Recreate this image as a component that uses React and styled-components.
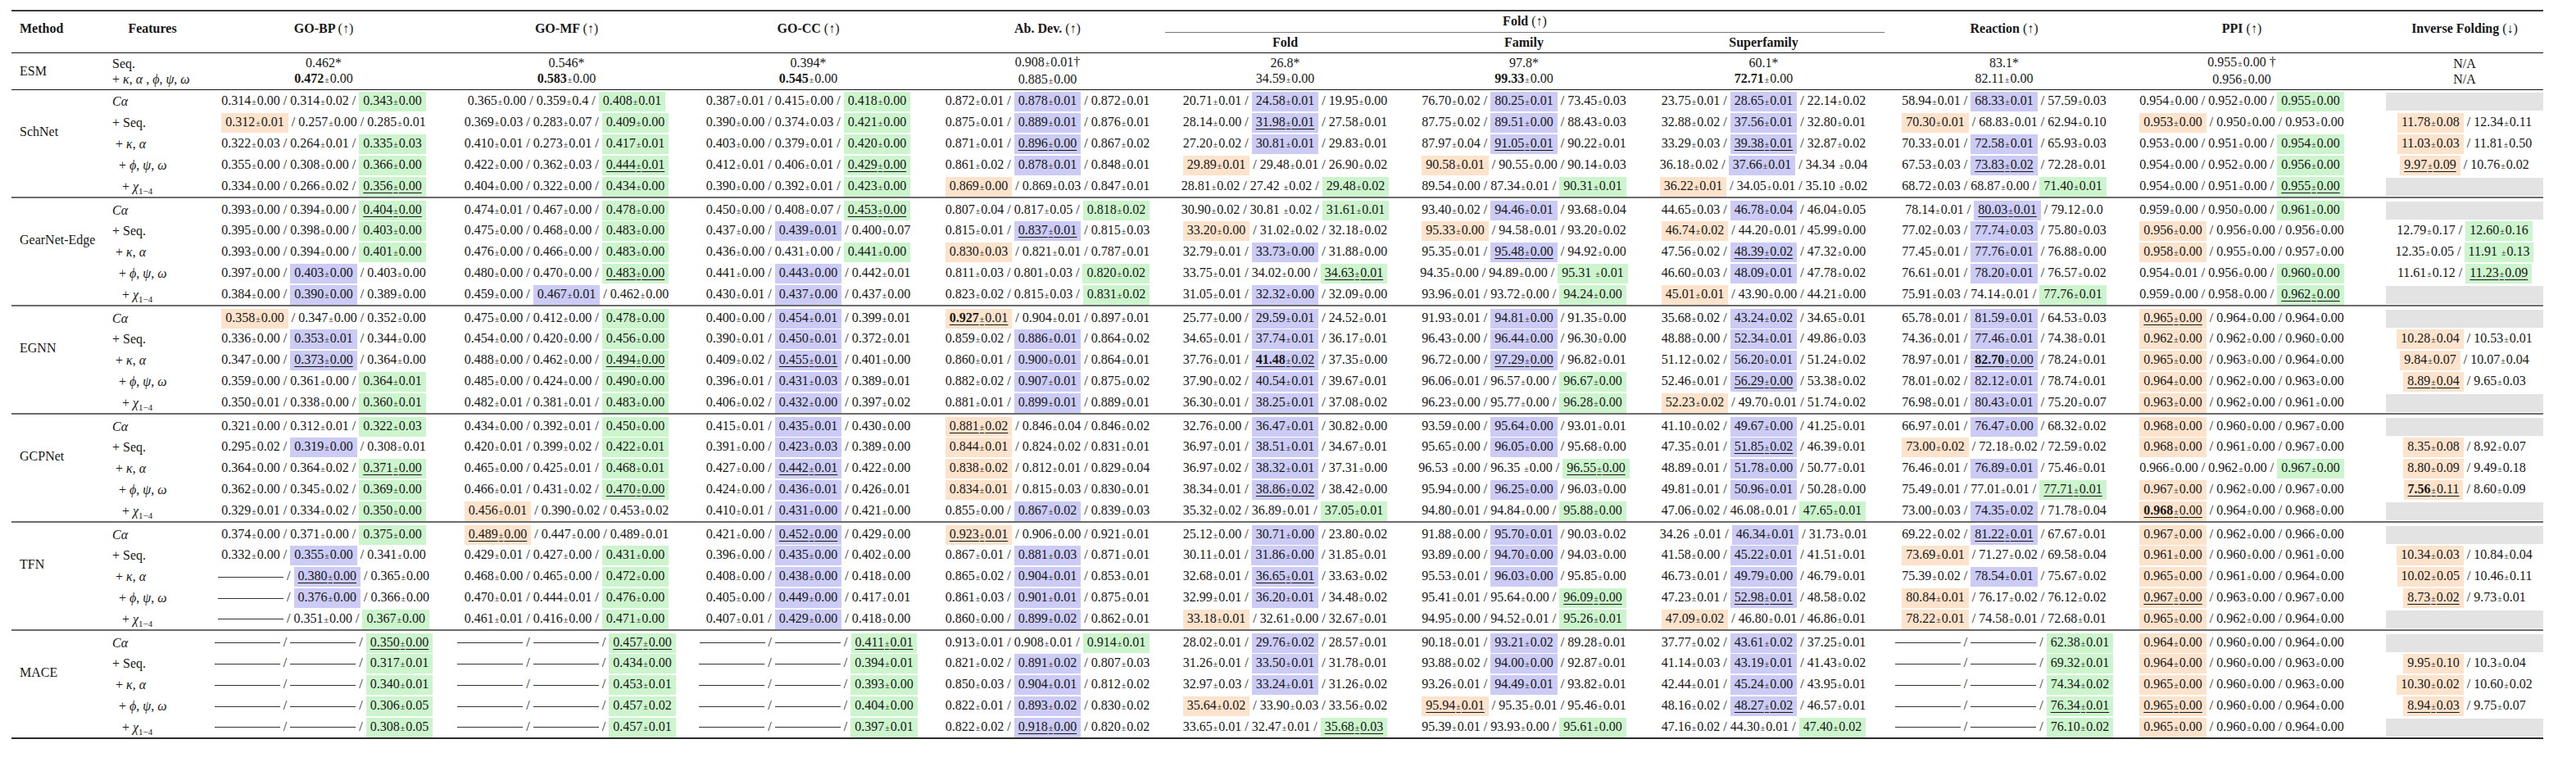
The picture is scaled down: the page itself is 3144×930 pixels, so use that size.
import React from 'react';
import styled, { createGlobalStyle } from 'styled-components';

const GlobalStyle = createGlobalStyle`
  body {
    margin: 0;
    background: #fff;
    color: #161616;
    font-family: "Liberation Serif", "DejaVu Serif", serif;
  }
`;

const TONES = { g: '#cdf5cd', b: '#cbcbf5', o: '#fde2cc' };

const Page = styled.div`
  padding: 12px 0 16px 14px;
`;

const Table = styled.table`
  width: 3090px;
  table-layout: fixed;
  border-collapse: collapse;
  font-size: 16px;
`;

const Head = styled.thead`
  border-top: 2px solid #3a3a3a;
  border-bottom: 1px solid #111;
`;

const HeadRow = styled.tr`
  height: ${p => p.$h}px;
`;

const HeadCell = styled.th`
  font-weight: bold;
  text-align: ${p => p.$align || 'center'};
  vertical-align: ${p => (p.$top ? 'top' : 'middle')};
  padding: ${p => (p.$top ? 11 : 0)}px ${p => p.$right || 0}px 0 ${p => p.$left || 0}px;
  line-height: 20px;
  white-space: nowrap;
  border-bottom: ${p => (p.$rule ? '1px solid #777' : 'none')};
`;

const Arrow = styled.span`
  font-weight: normal;
`;

const EsmBody = styled.tbody``;

const EsmRow = styled.tr`
  height: 45px;
`;

const Group = styled.tbody`
  border-top: ${p => (p.$first ? '1px solid #111' : '2px solid #6b6b6b')};
  border-bottom: ${p => (p.$last ? '2px solid #2a2a2a' : 'none')};
`;

const Row = styled.tr`
  height: ${p => (p.$first ? 28 : 26)}px;
`;

const MethodCell = styled.td`
  padding: 0 0 ${p => p.$lift || 0}px 10px;
  vertical-align: middle;
  text-align: left;
  white-space: nowrap;
`;

const FeatureCell = styled.td`
  padding: ${p => (p.$first ? 2 : 0)}px 0 0 ${p => 10 + (p.$indent || 0)}px;
  vertical-align: middle;
  text-align: left;
  white-space: nowrap;
  line-height: ${p => p.$lh || 22}px;
`;

const Cell = styled.td`
  padding: ${p => (p.$first ? 2 : 0)}px ${p => p.$right || 0}px 0 0;
  text-align: center;
  vertical-align: middle;
  white-space: nowrap;
  line-height: ${p => p.$lh || 22}px;
`;

const Shade = styled.div`
  height: 22px;
  background: #e3e3e3;
`;

const Num = styled.span`
  display: inline-block;
  padding: ${p => (p.$tone ? '0 5px' : '0')};
  background: ${p => TONES[p.$tone] || 'transparent'};
  text-decoration: ${p => (p.$under ? 'underline' : 'none')};
  text-underline-offset: 3px;
  text-decoration-thickness: 1px;
`;

const Main = styled.span`
  font-weight: ${p => (p.$bold ? 'bold' : 'normal')};
`;

const Pm = styled.span`
  font-size: 10px;
  margin: 0 1px;
`;

const Dash = styled.span`
  display: inline-block;
  width: 80px;
  border-top: 1px solid #333;
  vertical-align: middle;
`;

const M = styled.i`
  font-style: italic;
`;

const Sub = styled.sub`
  font-size: 11px;
  vertical-align: -4px;
  line-height: 0;
`;

const parseValue = raw => {
  let s = raw.trim();
  let tone = null;
  const m = s.match(/^([gbo]):/);
  if (m) {
    tone = m[1];
    s = s.slice(2);
  }
  let under = false;
  let bold = false;
  if (s.startsWith('_')) {
    under = true;
    s = s.slice(1);
  }
  if (s.startsWith('!')) {
    bold = true;
    s = s.slice(1);
  }
  const [main, rest] = s.split('±');
  return { tone, under, bold, main, rest };
};

const Value = ({ raw }) => {
  if (raw.trim() === '-') return <Dash />;
  const v = parseValue(raw);
  return (
    <Num $tone={v.tone} $under={v.under}>
      <Main $bold={v.bold}>{v.main}</Main>
      {v.rest !== undefined && (
        <>
          <Pm>±</Pm>
          {v.rest}
        </>
      )}
    </Num>
  );
};

const Values = ({ text }) => {
  const parts = text.split(' / ');
  return parts.map((p, i) => (
    <React.Fragment key={i}>
      {i > 0 && ' / '}
      <Value raw={p} />
    </React.Fragment>
  ));
};

const COLS = [113, 118, 300, 293, 297, 287, 293, 290, 295, 292, 320, 192];
const PPI_COL = 8;

const ESM = [
  ['0.462*', '!0.472±0.00'],
  ['0.546*', '!0.583±0.00'],
  ['0.394*', '!0.545±0.00'],
  ['0.908±0.01†', '0.885±0.00'],
  ['26.8*', '34.59±0.00'],
  ['97.8*', '!99.33±0.00'],
  ['60.1*', '!72.71±0.00'],
  ['83.1*', '82.11±0.00'],
  ['0.955±0.00 †', '0.956±0.00'],
  ['N/A', 'N/A'],
];

const FEATURES = [
  { indent: 0, node: <><M>C</M><M>α</M></> },
  { indent: 0, node: <>+ Seq.</> },
  { indent: 4, node: <>+ <M>κ</M>, <M>α</M></> },
  { indent: 8, node: <>+ <M>ϕ</M>, <M>ψ</M>, <M>ω</M></> },
  { indent: 12, node: <>+ <M>χ</M><Sub>1−4</Sub></> },
];

const GROUPS = [
  {
    name: 'SchNet',
    rows: [
      ['0.314±0.00 / 0.314±0.02 / g:0.343±0.00', '0.365±0.00 / 0.359±0.4 / g:0.408±0.01', '0.387±0.01 / 0.415±0.00 / g:0.418±0.00', '0.872±0.01 / b:0.878±0.01 / 0.872±0.01', '20.71±0.01 / b:24.58±0.01 / 19.95±0.00', '76.70±0.02 / b:80.25±0.01 / 73.45±0.03', '23.75±0.01 / b:28.65±0.01 / 22.14±0.02', '58.94±0.01 / b:68.33±0.01 / 57.59±0.03', '0.954±0.00 / 0.952±0.00 / g:0.955±0.00', 'gray'],
      ['o:0.312±0.01 / 0.257±0.00 / 0.285±0.01', '0.369±0.03 / 0.283±0.07 / g:0.409±0.00', '0.390±0.00 / 0.374±0.03 / g:0.421±0.00', '0.875±0.01 / b:0.889±0.01 / 0.876±0.01', '28.14±0.00 / b:_31.98±0.01 / 27.58±0.01', '87.75±0.02 / b:89.51±0.00 / 88.43±0.03', '32.88±0.02 / b:37.56±0.01 / 32.80±0.01', 'o:70.30±0.01 / 68.83±0.01 / 62.94±0.10', 'o:0.953±0.00 / 0.950±0.00 / 0.953±0.00', 'o:11.78±0.08 / 12.34±0.11'],
      ['0.322±0.03 / 0.264±0.01 / g:0.335±0.03', '0.410±0.01 / 0.273±0.01 / g:0.417±0.01', '0.403±0.00 / 0.379±0.01 / g:0.420±0.00', '0.871±0.01 / b:_0.896±0.00 / 0.867±0.02', '27.20±0.02 / b:30.81±0.01 / 29.83±0.01', '87.97±0.04 / b:_91.05±0.01 / 90.22±0.01', '33.29±0.03 / b:_39.38±0.01 / 32.87±0.02', '70.33±0.01 / b:72.58±0.01 / 65.93±0.03', '0.953±0.00 / 0.951±0.00 / g:0.954±0.00', 'o:11.03±0.03 / 11.81±0.50'],
      ['0.355±0.00 / 0.308±0.00 / g:0.366±0.00', '0.422±0.00 / 0.362±0.03 / g:_0.444±0.01', '0.412±0.01 / 0.406±0.01 / g:_0.429±0.00', '0.861±0.02 / b:0.878±0.01 / 0.848±0.01', 'o:29.89±0.01 / 29.48±0.01 / 26.90±0.02', 'o:90.58±0.01 / 90.55±0.00 / 90.14±0.03', '36.18±0.02 / b:37.66±0.01 / 34.34 ±0.04', '67.53±0.03 / b:_73.83±0.02 / 72.28±0.01', '0.954±0.00 / 0.952±0.00 / g:0.956±0.00', 'o:_9.97±0.09 / 10.76±0.02'],
      ['0.334±0.00 / 0.266±0.02 / g:_0.356±0.00', '0.404±0.00 / 0.322±0.00 / g:0.434±0.00', '0.390±0.00 / 0.392±0.01 / g:0.423±0.00', 'o:0.869±0.00 / 0.869±0.03 / 0.847±0.01', '28.81±0.02 / 27.42 ±0.02 / g:29.48±0.02', '89.54±0.00 / 87.34±0.01 / g:90.31±0.01', 'o:36.22±0.01 / 34.05±0.01 / 35.10 ±0.02', '68.72±0.03 / 68.87±0.00 / g:71.40±0.01', '0.954±0.00 / 0.951±0.00 / g:_0.955±0.00', 'gray'],
    ],
  },
  {
    name: 'GearNet-Edge',
    rows: [
      ['0.393±0.00 / 0.394±0.00 / g:_0.404±0.00', '0.474±0.01 / 0.467±0.00 / g:0.478±0.00', '0.450±0.00 / 0.408±0.07 / g:_0.453±0.00', '0.807±0.04 / 0.817±0.05 / g:0.818±0.02', '30.90±0.02 / 30.81 ±0.02 / g:31.61±0.01', '93.40±0.02 / b:94.46±0.01 / 93.68±0.04', '44.65±0.03 / b:46.78±0.04 / 46.04±0.05', '78.14±0.01 / b:_80.03±0.01 / 79.12±0.0', '0.959±0.00 / 0.950±0.00 / g:0.961±0.00', 'gray'],
      ['0.395±0.00 / 0.398±0.00 / g:0.403±0.00', '0.475±0.00 / 0.468±0.00 / g:0.483±0.00', '0.437±0.00 / b:0.439±0.01 / 0.400±0.07', '0.815±0.01 / b:_0.837±0.01 / 0.815±0.03', 'o:33.20±0.00 / 31.02±0.02 / 32.18±0.02', 'o:95.33±0.00 / 94.58±0.01 / 93.20±0.02', 'o:46.74±0.02 / 44.20±0.01 / 45.99±0.00', '77.02±0.03 / b:77.74±0.03 / 75.80±0.03', 'o:0.956±0.00 / 0.956±0.00 / 0.956±0.00', '12.79±0.17 / g:12.60±0.16'],
      ['0.393±0.00 / 0.394±0.00 / g:0.401±0.00', '0.476±0.00 / 0.466±0.00 / g:0.483±0.00', '0.436±0.00 / 0.431±0.00 / g:0.441±0.00', 'o:0.830±0.03 / 0.821±0.01 / 0.787±0.01', '32.79±0.01 / b:33.73±0.00 / 31.88±0.00', '95.35±0.01 / b:_95.48±0.00 / 94.92±0.00', '47.56±0.02 / b:_48.39±0.02 / 47.32±0.00', '77.45±0.01 / b:77.76±0.01 / 76.88±0.00', 'o:0.958±0.00 / 0.955±0.00 / 0.957±0.00', '12.35±0.05 / g:11.91 ±0.13'],
      ['0.397±0.00 / b:0.403±0.00 / 0.403±0.00', '0.480±0.00 / 0.470±0.00 / g:_0.483±0.00', '0.441±0.00 / b:0.443±0.00 / 0.442±0.01', '0.811±0.03 / 0.801±0.03 / g:0.820±0.02', '33.75±0.01 / 34.02±0.00 / g:_34.63±0.01', '94.35±0.00 / 94.89±0.00 / g:95.31 ±0.01', '46.60±0.03 / b:48.09±0.01 / 47.78±0.02', '76.61±0.01 / b:78.20±0.01 / 76.57±0.02', '0.954±0.01 / 0.956±0.00 / g:0.960±0.00', '11.61±0.12 / g:_11.23±0.09'],
      ['0.384±0.00 / b:0.390±0.00 / 0.389±0.00', '0.459±0.00 / b:0.467±0.01 / 0.462±0.00', '0.430±0.01 / b:0.437±0.00 / 0.437±0.00', '0.823±0.02 / 0.815±0.03 / g:0.831±0.02', '31.05±0.01 / b:32.32±0.00 / 32.09±0.00', '93.96±0.01 / 93.72±0.00 / g:94.24±0.00', 'o:45.01±0.01 / 43.90±0.00 / 44.21±0.00', '75.91±0.03 / 74.14±0.01 / g:77.76±0.01', '0.959±0.00 / 0.958±0.00 / g:_0.962±0.00', 'gray'],
    ],
  },
  {
    name: 'EGNN',
    rows: [
      ['o:0.358±0.00 / 0.347±0.00 / 0.352±0.00', '0.475±0.00 / 0.412±0.00 / g:0.478±0.00', '0.400±0.00 / b:0.454±0.01 / 0.399±0.01', 'o:_!0.927±0.01 / 0.904±0.01 / 0.897±0.01', '25.77±0.00 / b:29.59±0.01 / 24.52±0.01', '91.93±0.01 / b:94.81±0.00 / 91.35±0.00', '35.68±0.02 / b:43.24±0.02 / 34.65±0.01', '65.78±0.01 / b:81.59±0.01 / 64.53±0.03', 'o:_0.965±0.00 / 0.964±0.00 / 0.964±0.00', 'gray'],
      ['0.336±0.00 / b:0.353±0.01 / 0.344±0.00', '0.454±0.00 / 0.420±0.00 / g:0.456±0.00', '0.390±0.01 / b:0.450±0.01 / 0.372±0.01', '0.859±0.02 / b:0.886±0.01 / 0.864±0.02', '34.65±0.01 / b:37.74±0.01 / 36.17±0.01', '96.43±0.00 / b:96.44±0.00 / 96.30±0.00', '48.88±0.00 / b:52.34±0.01 / 49.86±0.03', '74.36±0.01 / b:77.46±0.01 / 74.38±0.01', 'o:0.962±0.00 / 0.962±0.00 / 0.960±0.00', 'o:10.28±0.04 / 10.53±0.01'],
      ['0.347±0.00 / b:_0.373±0.00 / 0.364±0.00', '0.488±0.00 / 0.462±0.00 / g:_0.494±0.00', '0.409±0.02 / b:_0.455±0.01 / 0.401±0.00', '0.860±0.01 / b:0.900±0.01 / 0.864±0.01', '37.76±0.01 / b:_!41.48±0.02 / 37.35±0.00', '96.72±0.00 / b:_97.29±0.00 / 96.82±0.01', '51.12±0.02 / b:56.20±0.01 / 51.24±0.02', '78.97±0.01 / b:_!82.70±0.00 / 78.24±0.01', 'o:0.965±0.00 / 0.963±0.00 / 0.964±0.00', 'o:9.84±0.07 / 10.07±0.04'],
      ['0.359±0.00 / 0.361±0.00 / g:0.364±0.01', '0.485±0.00 / 0.424±0.00 / g:0.490±0.00', '0.396±0.01 / b:0.431±0.03 / 0.389±0.01', '0.882±0.02 / b:0.907±0.01 / 0.875±0.02', '37.90±0.02 / b:40.54±0.01 / 39.67±0.01', '96.06±0.01 / 96.57±0.00 / g:96.67±0.00', '52.46±0.01 / b:_56.29±0.00 / 53.38±0.02', '78.01±0.02 / b:82.12±0.01 / 78.74±0.01', 'o:0.964±0.00 / 0.962±0.00 / 0.963±0.00', 'o:_8.89±0.04 / 9.65±0.03'],
      ['0.350±0.01 / 0.338±0.00 / g:0.360±0.01', '0.482±0.01 / 0.381±0.01 / g:0.483±0.00', '0.406±0.02 / b:0.432±0.00 / 0.397±0.02', '0.881±0.01 / b:0.899±0.01 / 0.889±0.01', '36.30±0.01 / b:38.25±0.01 / 37.08±0.02', '96.23±0.00 / 95.77±0.00 / g:96.28±0.00', 'o:52.23±0.02 / 49.70±0.01 / 51.74±0.02', '76.98±0.01 / b:80.43±0.01 / 75.20±0.07', 'o:0.963±0.00 / 0.962±0.00 / 0.961±0.00', 'gray'],
    ],
  },
  {
    name: 'GCPNet',
    rows: [
      ['0.321±0.00 / 0.312±0.01 / g:0.322±0.03', '0.434±0.00 / 0.392±0.01 / g:0.450±0.00', '0.415±0.01 / b:0.435±0.01 / 0.430±0.00', 'o:_0.881±0.02 / 0.846±0.04 / 0.846±0.02', '32.76±0.00 / b:36.47±0.01 / 30.82±0.00', '93.59±0.00 / b:95.64±0.00 / 93.01±0.01', '41.10±0.02 / b:49.67±0.00 / 41.25±0.01', '66.97±0.01 / b:76.47±0.00 / 68.32±0.02', 'o:0.968±0.00 / 0.960±0.00 / 0.967±0.00', 'gray'],
      ['0.295±0.02 / b:0.319±0.00 / 0.308±0.01', '0.420±0.01 / 0.399±0.02 / g:0.422±0.01', '0.391±0.00 / b:0.423±0.03 / 0.389±0.00', 'o:0.844±0.01 / 0.824±0.02 / 0.831±0.01', '36.97±0.01 / b:38.51±0.01 / 34.67±0.01', '95.65±0.00 / b:96.05±0.00 / 95.68±0.00', '47.35±0.01 / b:_51.85±0.02 / 46.39±0.01', 'o:73.00±0.02 / 72.18±0.02 / 72.59±0.02', 'o:0.968±0.00 / 0.961±0.00 / 0.967±0.00', 'o:8.35±0.08 / 8.92±0.07'],
      ['0.364±0.00 / 0.364±0.02 / g:_0.371±0.00', '0.465±0.00 / 0.425±0.01 / g:0.468±0.01', '0.427±0.00 / b:_0.442±0.01 / 0.422±0.00', 'o:0.838±0.02 / 0.812±0.01 / 0.829±0.04', '36.97±0.02 / b:38.32±0.01 / 37.31±0.00', '96.53 ±0.00 / 96.35 ±0.00 / g:_96.55±0.00', '48.89±0.01 / b:51.78±0.00 / 50.77±0.01', '76.46±0.01 / b:76.89±0.01 / 75.46±0.01', '0.966±0.00 / 0.962±0.00 / g:0.967±0.00', 'o:8.80±0.09 / 9.49±0.18'],
      ['0.362±0.00 / 0.345±0.02 / g:0.369±0.00', '0.466±0.01 / 0.431±0.02 / g:_0.470±0.00', '0.424±0.00 / b:0.436±0.01 / 0.426±0.01', 'o:0.834±0.01 / 0.815±0.03 / 0.830±0.01', '38.34±0.01 / b:_38.86±0.02 / 38.42±0.00', '95.94±0.00 / b:96.25±0.00 / 96.03±0.00', '49.81±0.01 / b:50.96±0.01 / 50.28±0.00', '75.49±0.01 / 77.01±0.01 / g:_77.71±0.01', 'o:0.967±0.00 / 0.962±0.00 / 0.967±0.00', 'o:_!7.56±0.11 / 8.60±0.09'],
      ['0.329±0.01 / 0.334±0.02 / g:0.350±0.00', 'o:0.456±0.01 / 0.390±0.02 / 0.453±0.02', '0.410±0.01 / b:0.431±0.00 / 0.421±0.00', '0.855±0.00 / b:0.867±0.02 / 0.839±0.03', '35.32±0.02 / 36.89±0.01 / g:37.05±0.01', '94.80±0.01 / 94.84±0.00 / g:95.88±0.00', '47.06±0.02 / 46.08±0.01 / g:47.65±0.01', '73.00±0.03 / b:74.35±0.02 / 71.78±0.04', 'o:_!0.968±0.00 / 0.964±0.00 / 0.968±0.00', 'gray'],
    ],
  },
  {
    name: 'TFN',
    rows: [
      ['0.374±0.00 / 0.371±0.00 / g:0.375±0.00', 'o:_0.489±0.00 / 0.447±0.00 / 0.489±0.01', '0.421±0.00 / b:_0.452±0.00 / 0.429±0.00', 'o:_0.923±0.01 / 0.906±0.00 / 0.921±0.01', '25.12±0.00 / b:30.71±0.00 / 23.80±0.02', '91.88±0.00 / b:95.70±0.01 / 90.03±0.02', '34.26 ±0.01 / b:46.34±0.01 / 31.73±0.01', '69.22±0.02 / b:_81.22±0.01 / 67.67±0.01', 'o:0.967±0.00 / 0.962±0.00 / 0.966±0.00', 'gray'],
      ['0.332±0.00 / b:0.355±0.00 / 0.341±0.00', '0.429±0.01 / 0.427±0.00 / g:0.431±0.00', '0.396±0.00 / b:0.435±0.00 / 0.402±0.00', '0.867±0.01 / b:0.881±0.03 / 0.871±0.01', '30.11±0.01 / b:31.86±0.00 / 31.85±0.01', '93.89±0.00 / b:94.70±0.00 / 94.03±0.00', '41.58±0.00 / b:45.22±0.01 / 41.51±0.01', 'o:73.69±0.01 / 71.27±0.02 / 69.58±0.04', 'o:0.961±0.00 / 0.960±0.00 / 0.961±0.00', 'o:10.34±0.03 / 10.84±0.04'],
      ['- / b:_0.380±0.00 / 0.365±0.00', '0.468±0.00 / 0.465±0.00 / g:0.472±0.00', '0.408±0.00 / b:0.438±0.00 / 0.418±0.00', '0.865±0.02 / b:0.904±0.01 / 0.853±0.01', '32.68±0.01 / b:_36.65±0.01 / 33.63±0.02', '95.53±0.01 / b:96.03±0.00 / 95.85±0.00', '46.73±0.01 / b:49.79±0.00 / 46.79±0.01', '75.39±0.02 / b:78.54±0.01 / 75.67±0.02', 'o:0.965±0.00 / 0.961±0.00 / 0.964±0.00', 'o:10.02±0.05 / 10.46±0.11'],
      ['- / b:0.376±0.00 / 0.366±0.00', '0.470±0.01 / 0.444±0.01 / g:0.476±0.00', '0.405±0.00 / b:0.449±0.00 / 0.417±0.01', '0.861±0.03 / b:0.901±0.01 / 0.875±0.01', '32.99±0.01 / b:36.20±0.01 / 34.48±0.02', '95.41±0.01 / 95.64±0.00 / g:_96.09±0.00', '47.23±0.01 / b:_52.98±0.01 / 48.58±0.02', 'o:80.84±0.01 / 76.17±0.02 / 76.12±0.02', 'o:_0.967±0.00 / 0.963±0.00 / 0.967±0.00', 'o:_8.73±0.02 / 9.73±0.01'],
      ['- / 0.351±0.00 / g:0.367±0.00', '0.461±0.01 / 0.416±0.00 / g:0.471±0.00', '0.407±0.01 / b:0.429±0.00 / 0.418±0.00', '0.860±0.00 / b:0.899±0.02 / 0.862±0.01', 'o:33.18±0.01 / 32.61±0.00 / 32.67±0.01', '94.95±0.00 / 94.52±0.01 / g:95.26±0.01', 'o:47.09±0.02 / 46.80±0.01 / 46.86±0.01', 'o:78.22±0.01 / 74.58±0.01 / 72.68±0.01', 'o:0.965±0.00 / 0.962±0.00 / 0.964±0.00', 'gray'],
    ],
  },
  {
    name: 'MACE',
    rows: [
      ['- / - / g:_0.350±0.00', '- / - / g:_0.457±0.00', '- / - / g:_0.411±0.01', '0.913±0.01 / 0.908±0.01 / g:0.914±0.01', '28.02±0.01 / b:29.76±0.02 / 28.57±0.01', '90.18±0.01 / b:93.21±0.02 / 89.28±0.01', '37.77±0.02 / b:43.61±0.02 / 37.25±0.01', '- / - / g:62.38±0.01', 'o:0.964±0.00 / 0.960±0.00 / 0.964±0.00', 'gray'],
      ['- / - / g:0.317±0.01', '- / - / g:0.434±0.00', '- / - / g:0.394±0.01', '0.821±0.02 / b:0.891±0.02 / 0.807±0.03', '31.26±0.01 / b:33.50±0.01 / 31.78±0.01', '93.88±0.02 / b:94.00±0.00 / 92.87±0.01', '41.14±0.03 / b:43.19±0.01 / 41.43±0.02', '- / - / g:69.32±0.01', 'o:0.964±0.00 / 0.960±0.00 / 0.963±0.00', 'o:9.95±0.10 / 10.3±0.04'],
      ['- / - / g:0.340±0.01', '- / - / g:0.453±0.01', '- / - / g:0.393±0.00', '0.850±0.03 / b:0.904±0.01 / 0.812±0.02', '32.97±0.03 / b:33.24±0.01 / 31.26±0.02', '93.26±0.01 / b:94.49±0.01 / 93.82±0.01', '42.44±0.01 / b:45.24±0.00 / 43.95±0.01', '- / - / g:74.34±0.02', 'o:0.965±0.00 / 0.960±0.00 / 0.963±0.00', 'o:10.30±0.02 / 10.60±0.02'],
      ['- / - / g:0.306±0.05', '- / - / g:0.457±0.02', '- / - / g:0.404±0.00', '0.822±0.01 / b:0.893±0.02 / 0.830±0.02', 'o:35.64±0.02 / 33.90±0.03 / 33.56±0.02', 'o:_95.94±0.01 / 95.35±0.01 / 95.46±0.01', '48.16±0.02 / b:_48.27±0.02 / 46.57±0.01', '- / - / g:_76.34±0.01', 'o:_0.965±0.00 / 0.960±0.00 / 0.964±0.00', 'o:_8.94±0.03 / 9.75±0.07'],
      ['- / - / g:0.308±0.05', '- / - / g:0.457±0.01', '- / - / g:0.397±0.01', '0.822±0.02 / b:_0.918±0.00 / 0.820±0.02', '33.65±0.01 / 32.47±0.01 / g:_35.68±0.03', '95.39±0.01 / 93.93±0.00 / g:95.61±0.00', '47.16±0.02 / 44.30±0.01 / g:47.40±0.02', '- / - / g:76.10±0.02', 'o:0.965±0.00 / 0.960±0.00 / 0.964±0.00', 'gray'],
    ],
  },
];

const TITLES = ['GO-BP', 'GO-MF', 'GO-CC', 'Ab. Dev.'];

const App = () => {
  return (
    <Page>
      <GlobalStyle />
      <Table>
        <colgroup>
          {COLS.map((w, i) => (
            <col key={i} style={{ width: w }} />
          ))}
        </colgroup>
        <Head>
          <HeadRow $h={26}>
            <HeadCell rowSpan={2} $top $align="left" $left={10}>Method</HeadCell>
            <HeadCell rowSpan={2} $top>Features</HeadCell>
            {TITLES.map(t => (
              <HeadCell key={t} rowSpan={2} $top>
                {t} <Arrow>(↑)</Arrow>
              </HeadCell>
            ))}
            <HeadCell colSpan={3} $rule>
              Fold <Arrow>(↑)</Arrow>
            </HeadCell>
            <HeadCell rowSpan={2} $top>
              Reaction <Arrow>(↑)</Arrow>
            </HeadCell>
            <HeadCell rowSpan={2} $top $right={32}>
              PPI <Arrow>(↑)</Arrow>
            </HeadCell>
            <HeadCell rowSpan={2} $top>
              Inverse Folding <Arrow>(↓)</Arrow>
            </HeadCell>
          </HeadRow>
          <HeadRow $h={25}>
            <HeadCell>Fold</HeadCell>
            <HeadCell>Family</HeadCell>
            <HeadCell>Superfamily</HeadCell>
          </HeadRow>
        </Head>
        <EsmBody>
          <EsmRow>
            <MethodCell>ESM</MethodCell>
            <FeatureCell $lh={19}>
              <div>Seq.</div>
              <div>
                + <M>κ</M>, <M>α</M> , <M>ϕ</M>, <M>ψ</M>, <M>ω</M>
              </div>
            </FeatureCell>
            {ESM.map((pair, i) => (
              <Cell key={i} $lh={19} $right={i === PPI_COL ? 32 : 0}>
                {pair.map((t, j) => (
                  <div key={j}>
                    <Value raw={t} />
                  </div>
                ))}
              </Cell>
            ))}
          </EsmRow>
        </EsmBody>
        {GROUPS.map((g, gi) => (
          <Group key={g.name} $first={gi === 0} $last={gi === GROUPS.length - 1}>
            {g.rows.map((cells, ri) => (
              <Row key={ri} $first={ri === 0}>
                {ri === 0 && (
                  <MethodCell rowSpan={5} $lift={28}>
                    {g.name}
                  </MethodCell>
                )}
                <FeatureCell $indent={FEATURES[ri].indent} $first={ri === 0}>
                  {FEATURES[ri].node}
                </FeatureCell>
                {cells.map((c, ci) => (
                  <Cell key={ci} $first={ri === 0} $right={ci === PPI_COL ? 32 : 0}>
                    {c === 'gray' ? <Shade /> : <Values text={c} />}
                  </Cell>
                ))}
              </Row>
            ))}
          </Group>
        ))}
      </Table>
    </Page>
  );
};

export default App;
